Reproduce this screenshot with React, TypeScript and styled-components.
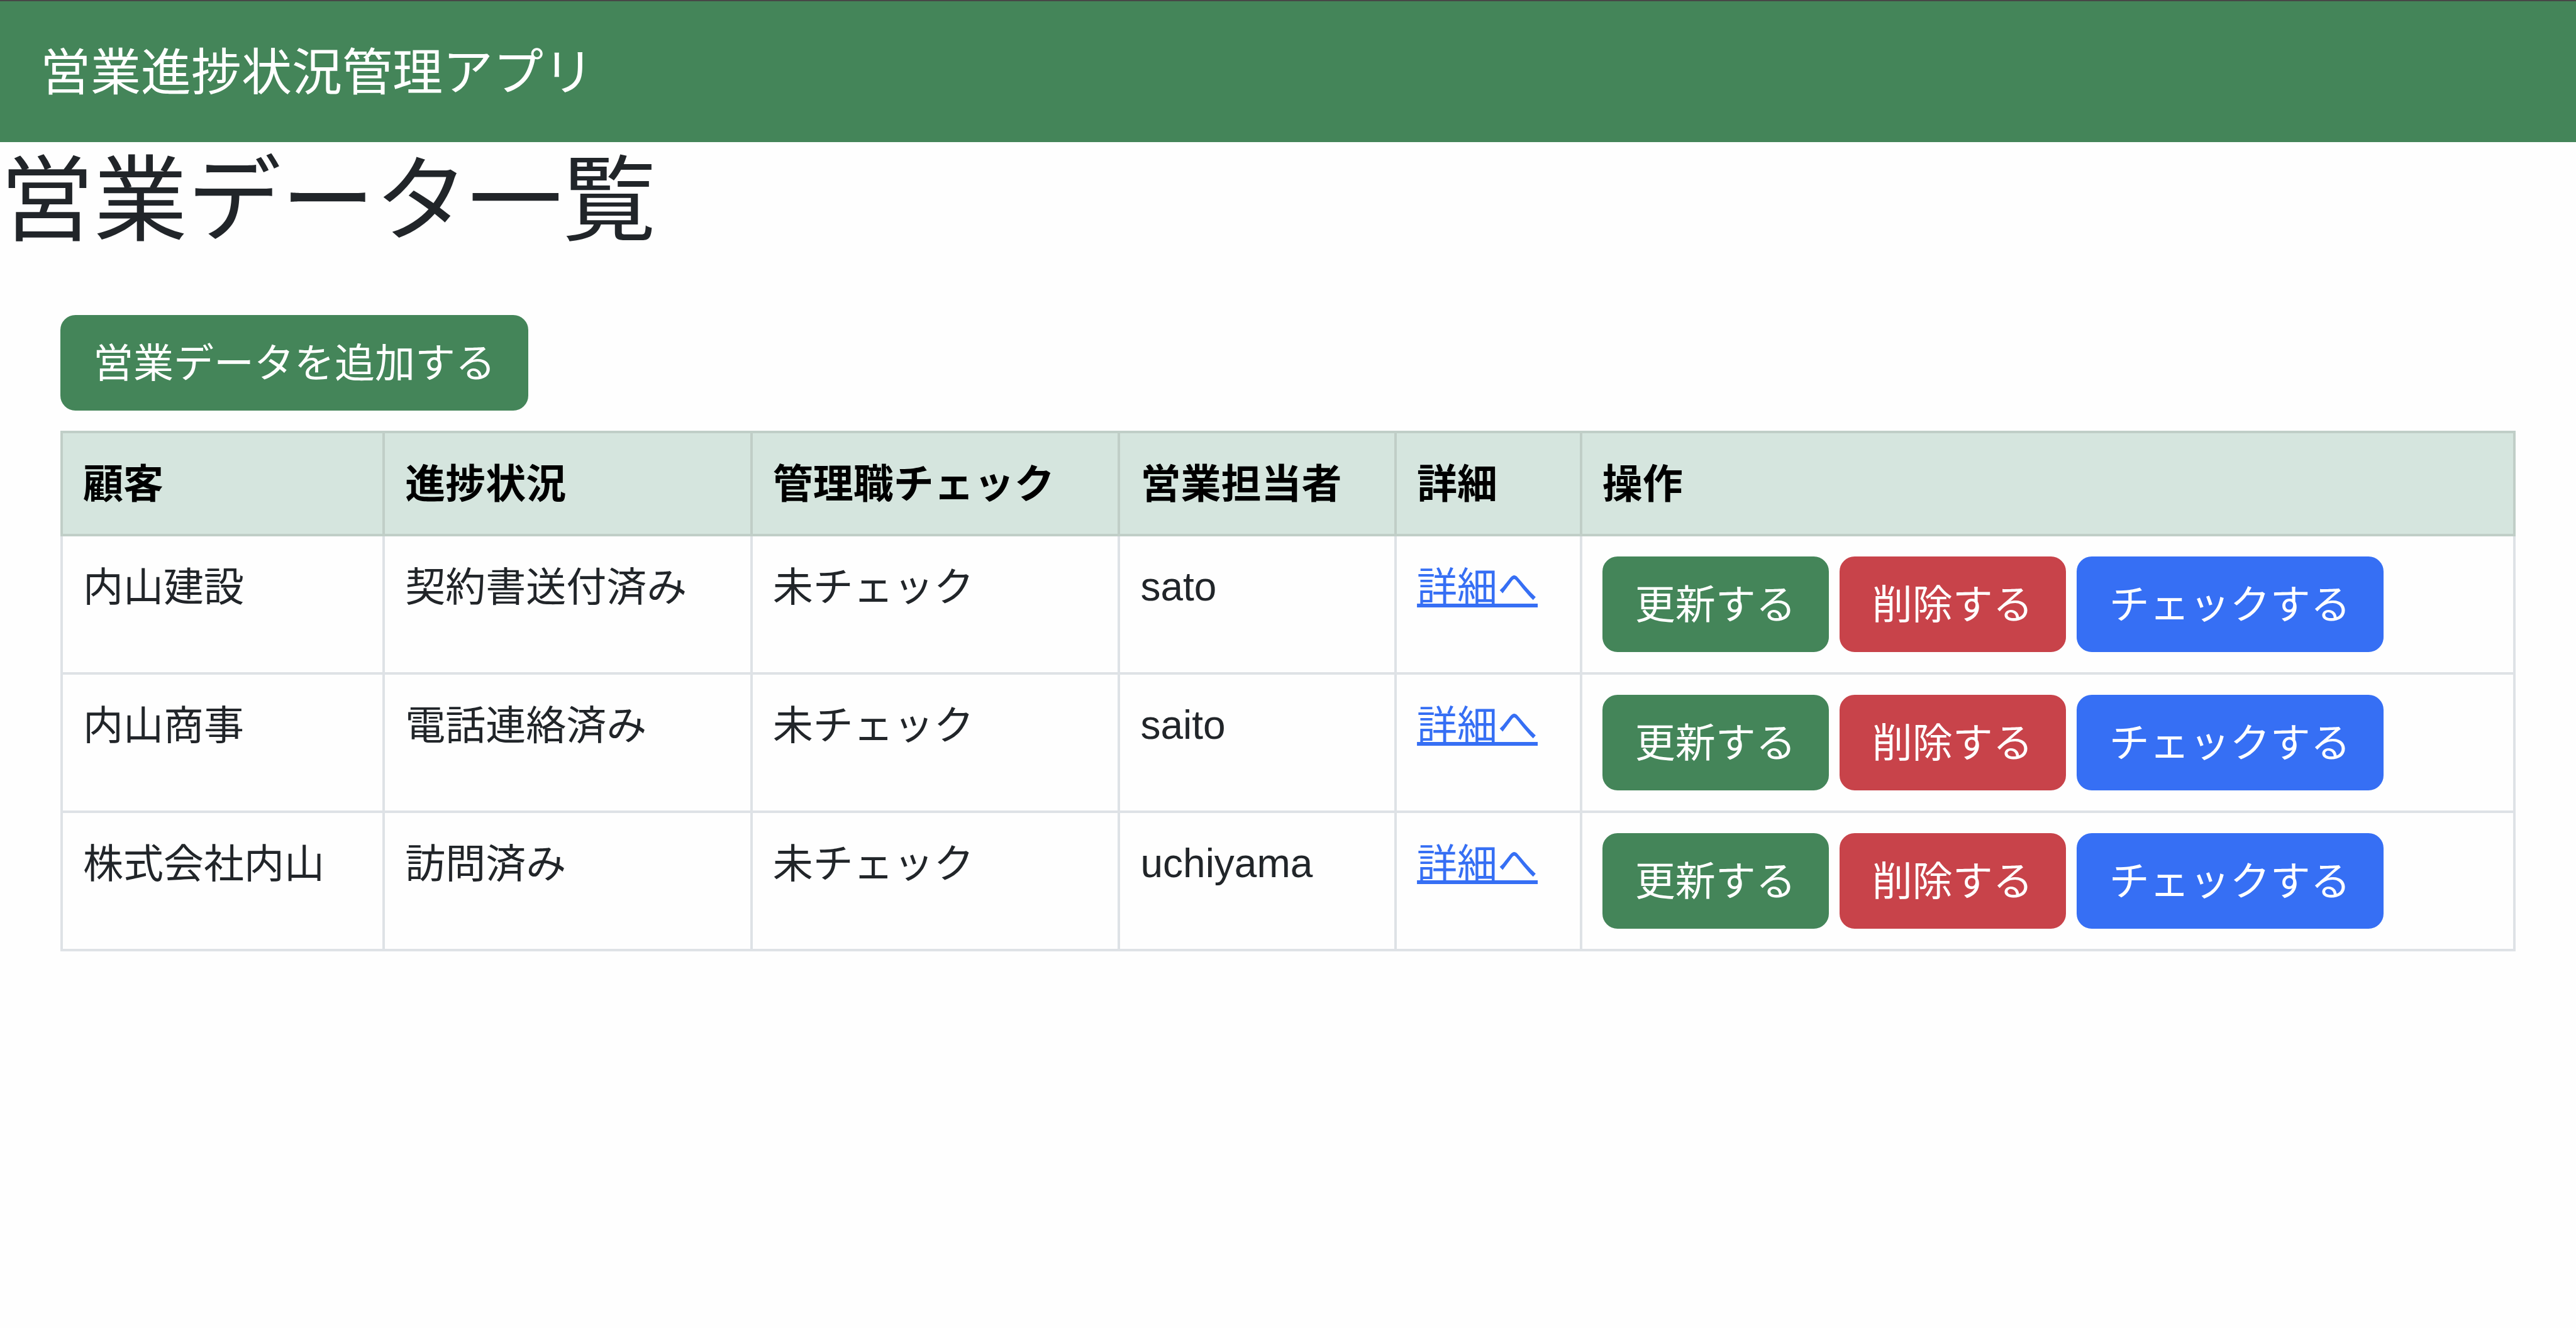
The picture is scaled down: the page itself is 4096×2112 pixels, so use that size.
import React from "react";
import styled, { createGlobalStyle } from "styled-components";

const palette = {
  success: "#448559",
  danger: "#c8434a",
  primary: "#366ff4",
  text: "#212529",
  border: "#dee2e6",
  headBackground: "#d5e5de",
  headBorder: "#c0cec7",
};

type Variant = "success" | "danger" | "primary";

const GlobalStyle = createGlobalStyle`
  *, *::before, *::after {
    box-sizing: border-box;
  }

  body {
    margin: 0;
    background: #fefefe;
    color: ${palette.text};
    font-family: Inter, "Noto Sans CJK JP", sans-serif;
    font-size: 64px;
    font-weight: 400;
    line-height: 96px;
  }
`;

const Navbar = styled.nav`
  display: flex;
  align-items: center;
  padding: 52px 64px;
  border-top: 2px solid #474747;
  background: ${palette.success};
`;

const Brand = styled.a`
  color: #fff;
  font-size: 80px;
  line-height: 120px;
  text-decoration: none;
  white-space: nowrap;
`;

const PageTitle = styled.h1`
  margin: 0 0 28px;
  font-size: 149px;
  font-weight: 400;
  line-height: 183px;
`;

const Content = styled.section`
  display: flex;
  flex-direction: column;
  align-items: flex-start;
  gap: 32px;
  padding: 64px 96px;
`;

const Button = styled.button<{ $variant: Variant }>`
  padding: 24px 48px;
  border: 4px solid ${({ $variant }) => palette[$variant]};
  border-radius: 24px;
  background: ${({ $variant }) => palette[$variant]};
  color: #fff;
  font: inherit;
  white-space: nowrap;
  cursor: pointer;
`;

const Table = styled.table`
  width: 100%;
  border-collapse: collapse;
`;

const HeadCell = styled.th`
  padding: 32px;
  border: 4px solid ${palette.headBorder};
  background: ${palette.headBackground};
  color: #000;
  font-weight: 700;
  text-align: left;
  white-space: nowrap;
`;

const Cell = styled.td`
  padding: 32px;
  border: 4px solid ${palette.border};
  vertical-align: top;
  white-space: nowrap;
`;

const OwnerCell = styled(Cell)`
  font-family: "Liberation Sans", "Noto Sans CJK JP", sans-serif;
`;

const DetailLink = styled.a`
  color: ${palette.primary};
  text-decoration: underline;
  text-decoration-thickness: 6px;
  text-decoration-skip-ink: none;
  text-underline-offset: 4px;
`;

const Actions = styled.div`
  display: flex;
  gap: 17px;
`;

const columns = ["顧客", "進捗状況", "管理職チェック", "営業担当者", "詳細", "操作"];

const deals = [
  { customer: "内山建設", progress: "契約書送付済み", check: "未チェック", owner: "sato" },
  { customer: "内山商事", progress: "電話連絡済み", check: "未チェック", owner: "saito" },
  { customer: "株式会社内山", progress: "訪問済み", check: "未チェック", owner: "uchiyama" },
];

export default function App() {
  return (
    <div lang="ja">
      <GlobalStyle />
      <Navbar>
        <Brand href="#">営業進捗状況管理アプリ</Brand>
      </Navbar>
      <main>
        <PageTitle>営業データ一覧</PageTitle>
        <Content>
          <Button type="button" $variant="success">営業データを追加する</Button>
          <Table>
            <thead>
              <tr>
                {columns.map((column) => (
                  <HeadCell key={column} scope="col">{column}</HeadCell>
                ))}
              </tr>
            </thead>
            <tbody>
              {deals.map((deal) => (
                <tr key={deal.customer}>
                  <Cell>{deal.customer}</Cell>
                  <Cell>{deal.progress}</Cell>
                  <Cell>{deal.check}</Cell>
                  <OwnerCell>{deal.owner}</OwnerCell>
                  <Cell>
                    <DetailLink href="#">詳細へ</DetailLink>
                  </Cell>
                  <Cell>
                    <Actions>
                      <Button type="button" $variant="success">更新する</Button>
                      <Button type="button" $variant="danger">削除する</Button>
                      <Button type="button" $variant="primary">チェックする</Button>
                    </Actions>
                  </Cell>
                </tr>
              ))}
            </tbody>
          </Table>
        </Content>
      </main>
    </div>
  );
}
